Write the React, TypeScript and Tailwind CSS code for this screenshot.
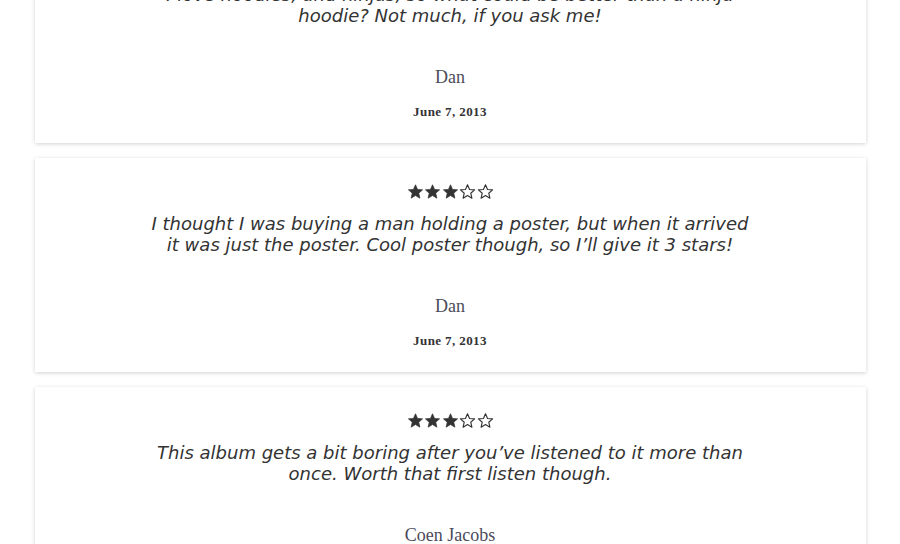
import React from "react"

type Review = {
  rating: number
  text: string
  author: string
  date: string
}

const reviews: Review[] = [
  {
    rating: 5,
    text: "I love hoodies, and ninjas, so what could be better than a ninja hoodie? Not much, if you ask me!",
    author: "Dan",
    date: "June 7, 2013",
  },
  {
    rating: 3,
    text: "I thought I was buying a man holding a poster, but when it arrived it was just the poster. Cool poster though, so I’ll give it 3 stars!",
    author: "Dan",
    date: "June 7, 2013",
  },
  {
    rating: 3,
    text: "This album gets a bit boring after you’ve listened to it more than once. Worth that first listen though.",
    author: "Coen Jacobs",
    date: "June 7, 2013",
  },
]

const Star = ({ filled }: { filled: boolean }) => (
  <svg viewBox="0 0 24 24" className="w-[17px] h-[17px]">
    <path
      d="M12 2.5l2.9 6.6 7.1.6-5.4 4.7 1.6 7-6.2-3.7-6.2 3.7 1.6-7L2 9.7l7.1-.6z"
      fill={filled ? "#333" : "#fff"}
      stroke="#333"
      strokeWidth={filled ? 1 : 1.6}
      strokeLinejoin="round"
    />
  </svg>
)

const ReviewCard = ({ review }: { review: Review }) => (
  <div className="flex flex-col items-center bg-white pt-[25px] pb-[24px] shadow-[0_1px_4px_rgba(0,0,0,0.18)]">
    {/* STARS */}
    <div className="flex gap-[0.5px]">
      {[0, 1, 2, 3, 4].map((i) => (
        <Star key={i} filled={i < review.rating} />
      ))}
    </div>
    {/* TEXT */}
    <p className="mt-[13px] max-w-[610px] text-center text-[18px] leading-[21px] italic text-[#333] font-['DejaVu_Sans',sans-serif]">
      {review.text}
    </p>
    <p className="mt-[39px] text-[18px] leading-[24px] text-[#4b4b5a] font-['Liberation_Serif',serif]">
      {review.author}
    </p>
    <p className="mt-[16px] text-[13px] leading-[14px] font-bold tracking-[0.4px] text-[#333] font-['Liberation_Serif',serif]">
      {review.date}
    </p>
  </div>
)

export default function App() {
  return (
    <div className="h-[544px] overflow-hidden bg-white">
      <div className="w-[831px] mx-auto -mt-[71px] flex flex-col gap-[15px]">
        {reviews.map((r, i) => (
          <ReviewCard key={i} review={r} />
        ))}
      </div>
    </div>
  )
}
